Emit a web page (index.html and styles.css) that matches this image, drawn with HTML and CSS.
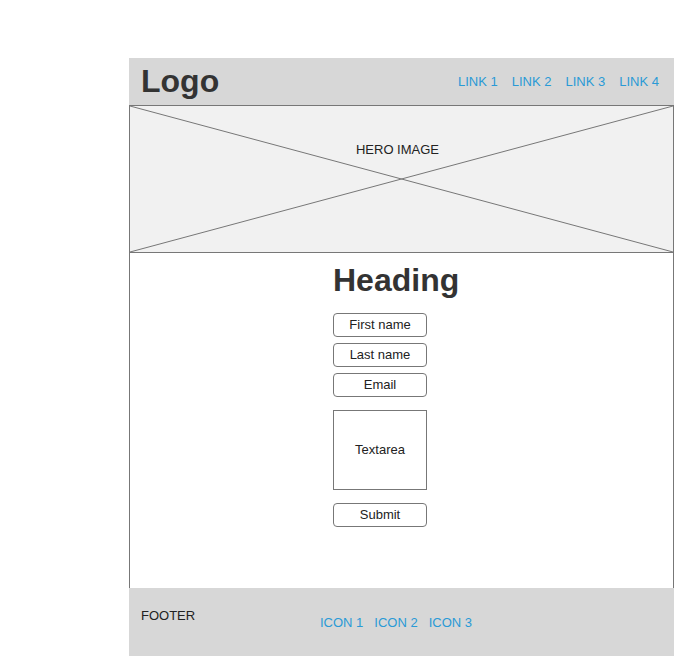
FILE: index.html
```html
<!DOCTYPE html>
<html lang="en">
<head>
<meta charset="utf-8">
<title>Wireframe</title>
<link rel="stylesheet" href="styles.css">
</head>
<body>
<div class="page">
  <header class="topbar">
    <div class="logo">Logo</div>
    <nav class="links">
      <a href="#">LINK 1</a>
      <a href="#">LINK 2</a>
      <a href="#">LINK 3</a>
      <a href="#">LINK 4</a>
    </nav>
  </header>

  <section class="hero">
    <svg class="cross" viewBox="0 0 100 100" preserveAspectRatio="none">
      <line x1="0" y1="0" x2="100" y2="100" vector-effect="non-scaling-stroke"/>
      <line x1="0" y1="100" x2="100" y2="0" vector-effect="non-scaling-stroke"/>
    </svg>
    <span class="hero-label">HERO IMAGE</span>
  </section>

  <main class="content">
    <h1>Heading</h1>
    <form class="form">
      <div class="field">First name</div>
      <div class="field">Last name</div>
      <div class="field">Email</div>
      <div class="area">Textarea</div>
      <div class="field">Submit</div>
    </form>
  </main>

  <footer class="foot">
    <span class="foot-label">FOOTER</span>
    <div class="icons">
      <a href="#">ICON 1</a>
      <a href="#">ICON 2</a>
      <a href="#">ICON 3</a>
    </div>
  </footer>
</div>
</body>
</html>
```

FILE: styles.css
```css
/* ── wireframe base ──────────────────────────────── */
*{box-sizing:border-box}
body{margin:0;background:#fff;color:#222;
     font-family:"Liberation Sans",Arial,sans-serif;font-size:13px}
a{color:#2a9ad6;text-decoration:none}
.page{width:545px;margin:58px 0 0 129px}

/* ── header ──────────────────────────────────────── */
.topbar{height:47px;background:#d7d7d7;display:flex;align-items:center;
        justify-content:space-between;padding:0 15px 0 12px}
.logo{font-size:32px;font-weight:bold;color:#333}
.links{display:flex;gap:14px}

/* ── hero ────────────────────────────────────────── */
.hero{position:relative;height:148px;background:#f1f1f1;border:1px solid #777;
      text-align:center;padding-top:36px;padding-right:8px}
.cross{position:absolute;inset:0;width:100%;height:100%}
.cross line{stroke:#777;stroke-width:1}
.hero-label{position:relative}

/* ── form area ───────────────────────────────────── */
.content{height:335px;border:1px solid #777;border-width:0 1px;
         padding:9px 0 0 203px}
h1{margin:0 0 14px;font-size:32px;line-height:37px;color:#333}
.form{display:flex;flex-direction:column;align-items:flex-start;gap:6px;width:94px}
.field{width:94px;height:24px;border:1px solid #777;border-radius:4px;padding-bottom:1px;
       display:flex;align-items:center;justify-content:center}
.area{width:94px;height:80px;border:1px solid #777;margin:7px 0;padding-bottom:2px;
      display:flex;align-items:center;justify-content:center}

/* ── footer ──────────────────────────────────────── */
.foot{height:68px;background:#d7d7d7;display:grid;
      grid-template-columns:179px auto;align-items:start;padding:20px 0 0 12px}
.foot-label{line-height:15px}
.icons{display:flex;gap:11px;margin-top:7px;line-height:15px}
```
